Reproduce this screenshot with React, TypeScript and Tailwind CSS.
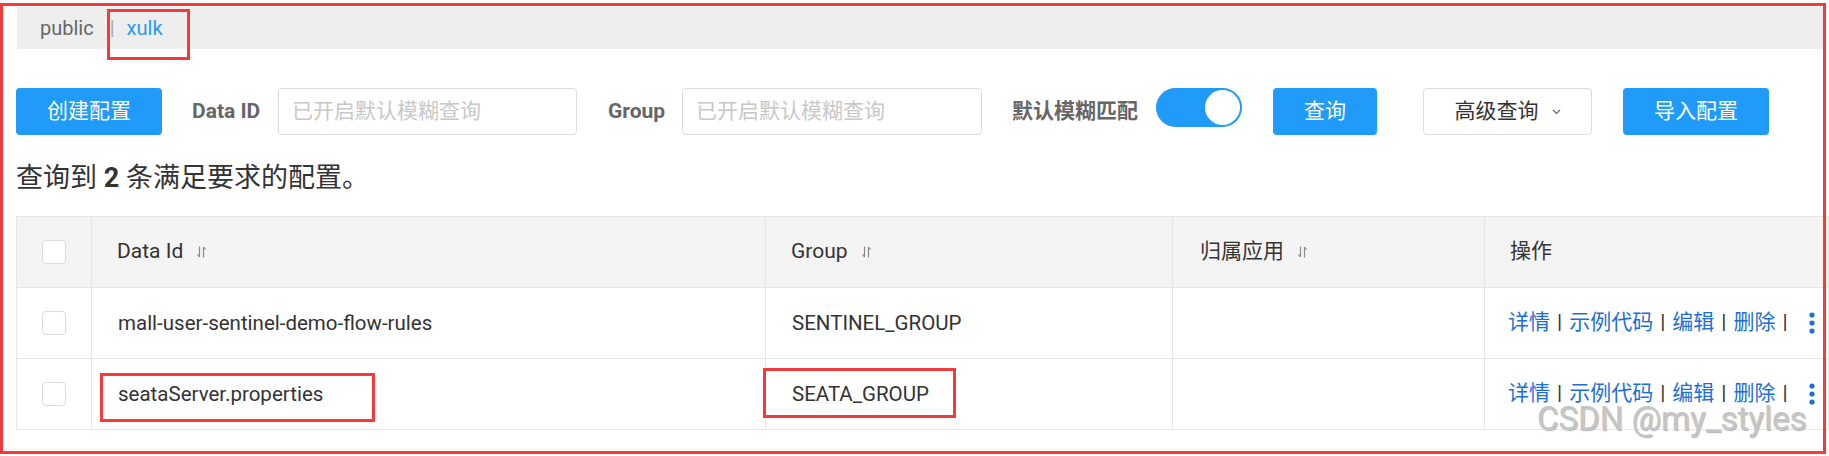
import React from "react";

const SortIcon = () => (
  <svg width="11" height="14" viewBox="0 0 11 14" className="ml-[13px] shrink-0" fill="none" stroke="#8a8a8a" strokeWidth="1.2">
    <path d="M3.5 1.5v10.5M3.5 12L1.5 9.5" />
    <path d="M7.5 12.5V2M7.5 2l2 2.5" />
  </svg>
);

const Checkbox = () => (
  <div className="w-[24px] h-[24px] rounded-[4px] border border-[#dcdcdc] bg-white" />
);

const Dots = () => (
  <svg width="6" height="24" viewBox="0 0 6 24" className="ml-[14px]">
    <circle cx="3" cy="4" r="2.6" fill="#1d6fd6" />
    <circle cx="3" cy="12" r="2.6" fill="#1d6fd6" />
    <circle cx="3" cy="20" r="2.6" fill="#1d6fd6" />
  </svg>
);

const Actions = () => (
  <div className="flex items-center text-[#1d6fd6]">
    <span>详情</span>
    <span className="px-[7px] text-[#333]">|</span>
    <span>示例代码</span>
    <span className="px-[7px] text-[#333]">|</span>
    <span>编辑</span>
    <span className="px-[7px] text-[#333]">|</span>
    <span>删除</span>
    <span className="px-[7px] text-[#333]">|</span>
    <Dots />
  </div>
);

const rows = [
  { id: "mall-user-sentinel-demo-flow-rules", group: "SENTINEL_GROUP" },
  { id: "seataServer.properties", group: "SEATA_GROUP" },
];

export default function App() {
  return (
    <div className="relative w-[1829px] h-[456px] bg-white overflow-hidden font-['Roboto','Noto_Sans_CJK_SC',sans-serif] text-[#333]">
      <div className="pt-[7px] pl-[17px]">
        {/* namespace tabs */}
        <div className="h-[42px] bg-[#eeeeee] flex items-center pl-[23px] text-[20px] mr-[6px]">
          <span className="text-[#666]">public</span>
          <span className="text-[#aaa] ml-[16px]">|</span>
          <span className="text-[#2a9bf5] ml-[12px]">xulk</span>
        </div>

        {/* toolbar */}
        <div className="mt-[39px] h-[47px] flex items-center text-[21px] -ml-[1px]">
          <button className="w-[146px] h-[47px] bg-[#209bfa] text-white rounded-[4px]">创建配置</button>
          <span className="ml-[30px] w-[67px] font-bold text-[#666] whitespace-nowrap">Data ID</span>
          <div className="ml-[19px] w-[299px] h-[47px] border border-[#dcdcdc] rounded-[4px] px-[13px] flex items-center text-[#c8c8c8]">
            已开启默认模糊查询
          </div>
          <span className="ml-[31px] w-[56px] font-bold text-[#666]">Group</span>
          <div className="ml-[18px] w-[300px] h-[47px] border border-[#dcdcdc] rounded-[4px] px-[13px] flex items-center text-[#c8c8c8]">
            已开启默认模糊查询
          </div>
          <span className="ml-[30px] w-[125px] font-bold text-[#666] whitespace-nowrap">默认模糊匹配</span>
          <div className="ml-[19px] self-start relative w-[86px] h-[39px] rounded-full bg-[#209bfa]">
            <div className="absolute right-[2px] top-[2px] w-[35px] h-[35px] rounded-full bg-white" />
          </div>
          <button className="ml-[31px] w-[104px] h-[47px] bg-[#209bfa] text-white rounded-[4px]">查询</button>
          <button className="ml-[46px] w-[169px] h-[47px] bg-white border border-[#dcdcdc] rounded-[4px] flex items-center justify-center gap-[13px] text-[#333]">
            <span>高级查询</span>
            <svg width="9" height="6" viewBox="0 0 9 6" fill="none" stroke="#666" strokeWidth="1.2">
              <path d="M1 1l3.5 3.5L8 1" />
            </svg>
          </button>
          <button className="ml-[31px] w-[146px] h-[47px] bg-[#209bfa] text-white rounded-[4px]">导入配置</button>
        </div>

        {/* summary */}
        <div className="mt-[27px] h-[32px] flex items-center text-[27px] text-[#333] -ml-[1px] whitespace-pre">
          <span>查询到 </span>
          <span className="font-bold">2</span>
          <span> 条满足要求的配置。</span>
        </div>

        {/* table */}
        <div className="mt-[22px] -ml-[1px] grid grid-cols-[75px_674px_407px_312px_1fr] border-t border-l border-[#e6e6e6] text-[21px] text-[#333]">
          <div className="h-[71px] bg-[#f4f4f4] border-r border-b border-[#e6e6e6] flex items-center justify-center">
            <Checkbox />
          </div>
          <div className="h-[71px] bg-[#f4f4f4] border-r border-b border-[#e6e6e6] flex items-center pl-[25px]">
            <span>Data Id</span>
            <SortIcon />
          </div>
          <div className="h-[71px] bg-[#f4f4f4] border-r border-b border-[#e6e6e6] flex items-center pl-[25px]">
            <span>Group</span>
            <SortIcon />
          </div>
          <div className="h-[71px] bg-[#f4f4f4] border-r border-b border-[#e6e6e6] flex items-center pl-[27px]">
            <span>归属应用</span>
            <SortIcon />
          </div>
          <div className="h-[71px] bg-[#f4f4f4] border-r border-b border-[#e6e6e6] flex items-center pl-[25px]">
            <span>操作</span>
          </div>

          {rows.map((r) => (
            <React.Fragment key={r.id}>
              <div className="h-[71px] border-r border-b border-[#e6e6e6] flex items-center justify-center">
                <Checkbox />
              </div>
              <div className="h-[71px] border-r border-b border-[#e6e6e6] flex items-center pl-[26px] text-[20.5px]">{r.id}</div>
              <div className="h-[71px] border-r border-b border-[#e6e6e6] flex items-center pl-[26px] text-[20.5px]">{r.group}</div>
              <div className="h-[71px] border-r border-b border-[#e6e6e6]" />
              <div className="h-[71px] border-r border-b border-[#e6e6e6] flex items-center pl-[23px] text-[21px]">
                <Actions />
              </div>
            </React.Fragment>
          ))}
        </div>
      </div>

      {/* watermark */}
      <div className="absolute left-[1537px] top-[402px] text-[33px] leading-none text-[#c4c4c4] font-['Roboto',sans-serif] whitespace-nowrap [text-shadow:0_0_2px_#ffffff,1px_1px_1px_#999999]">
        CSDN @my_styles
      </div>

      {/* red annotation frames */}
      <div className="absolute left-0 top-[3px] w-[1826px] h-[451px] border-[3px] border-[#f23b3b] pointer-events-none" />
      <div className="absolute left-[107px] top-[9px] w-[83px] h-[51px] border-[3px] border-[#f23b3b] pointer-events-none" />
      <div className="absolute left-[100px] top-[373px] w-[275px] h-[49px] border-[3px] border-[#f23b3b] pointer-events-none" />
      <div className="absolute left-[763px] top-[368px] w-[193px] h-[50px] border-[3px] border-[#f23b3b] pointer-events-none" />
    </div>
  );
}
